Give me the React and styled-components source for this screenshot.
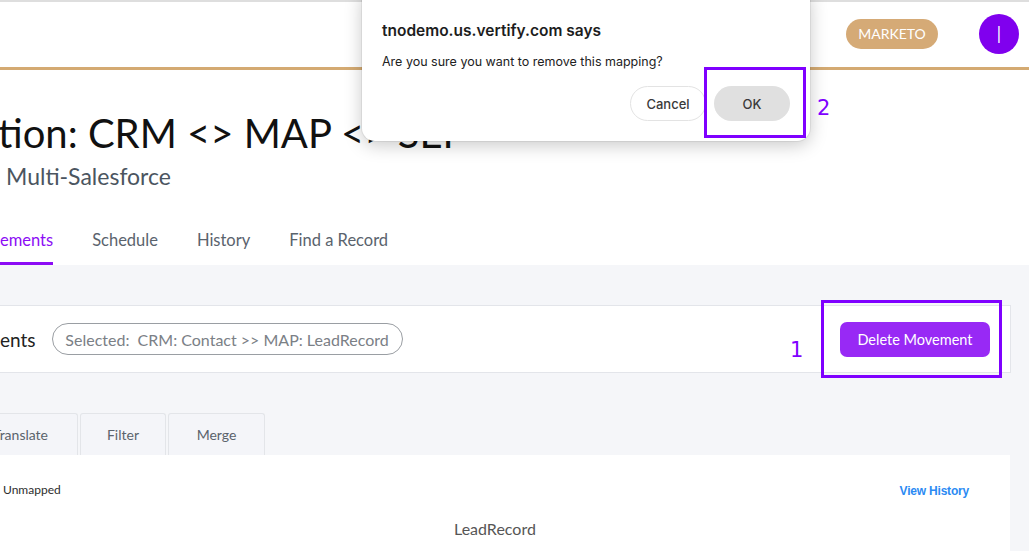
import React from "react"
import styled, { createGlobalStyle } from "styled-components"

const GlobalStyle = createGlobalStyle`
  html, body {
    margin: 0;
    padding: 0;
    background: #ffffff;
    overflow: hidden;
  }
  body {
    font-family: "Lato", "Noto Sans", sans-serif;
  }
`

const Page = styled.div`
  position: relative;
  width: 1029px;
  height: 551px;
  overflow: hidden;
  background: #ffffff;
`

const TopBar = styled.header`
  border-top: 2px solid #dedede;
  border-bottom: 3px solid #d4aa72;
  box-shadow: 0 3px 6px rgba(0, 0, 0, 0.08);
  display: flex;
  align-items: center;
  justify-content: flex-end;
  gap: 41px;
  padding-right: 10px;
  box-sizing: border-box;
  height: 70px;
`

const SourcePill = styled.span`
  background: #d5aa76;
  color: #fff;
  font-size: 14px;
  height: 30px;
  width: 92px;
  border-radius: 15px;
  display: flex;
  align-items: center;
  justify-content: center;
  margin-top: -2px;
`

const Avatar = styled.span`
  width: 40px;
  height: 40px;
  border-radius: 50%;
  background: #8000ee;
  color: #fff;
  font-size: 24px;
  font-weight: 300;
  display: flex;
  align-items: center;
  justify-content: center;
  margin-top: -2px;
`

const Heading = styled.div`
  padding-top: 37px;
  background: #fff;
`

const Title = styled.h1`
  margin: 0 0 0 -2px;
  font-size: 40px;
  font-weight: 400;
  color: #111;
  line-height: 52px;
  white-space: nowrap;
`

const Subtitle = styled.div`
  margin: 2px 0 0 6px;
  font-size: 23px;
  color: #4b5560;
  line-height: 30px;
`

const Tabs = styled.nav`
  display: flex;
  gap: 39px;
  margin-top: 36px;
  height: 38px;
`

const Tab = styled.span`
  font-size: 16.5px;
  color: ${p => (p.$active ? "#8c0cf5" : "#5a636d")};
  border-bottom: ${p => (p.$active ? "3px solid #8c0cf5" : "3px solid transparent")};
  line-height: 22px;
  padding-top: 2px;
  box-sizing: border-box;
  height: 38px;
`

const Body = styled.main`
  background: #f5f6f9;
  padding-top: 40px;
  height: 300px;
`

const SelectionBar = styled.section`
  background: #fff;
  border-top: 1px solid #e3e5ea;
  border-bottom: 1px solid #e3e5ea;
  border-right: 1px solid #e3e5ea;
  width: 1010px;
  height: 66px;
  display: flex;
  align-items: center;
`

const BarLabel = styled.span`
  font-size: 19px;
  color: #222;
  margin-right: 16px;
`

const SelectedPill = styled.span`
  border: 1px solid #9a9ea3;
  border-radius: 17px;
  height: 32px;
  width: 351px;
  box-sizing: border-box;
  display: flex;
  align-items: center;
  justify-content: center;
  font-size: 16px;
  color: #7b8086;
  white-space: pre;
`

const DeleteButton = styled.button`
  margin-left: auto;
  margin-right: 20px;
  width: 150px;
  height: 35px;
  border: none;
  border-radius: 7px;
  background: #9829f5;
  color: #fff;
  font-family: "Lato", sans-serif;
  font-size: 14.5px;
`

const SubTabs = styled.div`
  display: flex;
  gap: 2px;
  margin-top: 40px;
  margin-left: -20px;
`

const SubTab = styled.span`
  height: 42px;
  width: ${p => p.$w}px;
  box-sizing: border-box;
  border: 1px solid #e3e5e9;
  border-bottom: none;
  border-radius: 3px 3px 0 0;
  background: #f4f5f9;
  display: flex;
  align-items: center;
  justify-content: ${p => (p.$end ? "flex-end" : "center")};
  padding-right: ${p => (p.$end ? "29px" : "0")};
  font-size: 14px;
  color: #5b636c;
`

const MapPanel = styled.section`
  background: #fff;
  width: 1010px;
  height: 100px;
  display: grid;
  grid-template-columns: 1fr auto;
  grid-template-rows: 35px 40px;
  padding-top: 17px;
  box-sizing: border-box;
`

const Unmapped = styled.span`
  font-size: 12px;
  color: #2d2d2d;
  padding-left: 3px;
  line-height: 36px;
`

const HistoryLink = styled.a`
  font-family: "Liberation Sans", Arial, sans-serif;
  font-weight: 700;
  font-size: 12px;
  color: #2b8af3;
  margin-right: 41px;
  line-height: 38px;
  letter-spacing: -0.2px;
`

const ObjectName = styled.span`
  grid-column: 1 / span 2;
  font-size: 16px;
  color: #565656;
  padding-left: 454px;
  line-height: 44px;
`

const Dialog = styled.div`
  position: absolute;
  left: 362px;
  top: -12px;
  width: 448px;
  height: 153px;
  background: #fff;
  border-radius: 13px;
  box-shadow: 0 4px 18px rgba(0, 0, 0, 0.22), 0 0 0 1px rgba(0, 0, 0, 0.06);
  box-sizing: border-box;
  padding: 33px 20px 0 20px;
  font-family: "Inter", "Liberation Sans", sans-serif;
`

const DialogTitle = styled.div`
  font-size: 15.5px;
  font-weight: 600;
  color: #1d1d1d;
  line-height: 20px;
`

const DialogText = styled.div`
  margin-top: 12px;
  font-size: 12.5px;
  color: #222;
  line-height: 18px;
`

const DialogActions = styled.div`
  display: flex;
  justify-content: flex-end;
  gap: 8px;
  margin-top: 15px;
`

const DialogButton = styled.button`
  width: 76px;
  height: 35px;
  border-radius: 18px;
  font-family: "Inter", "Liberation Sans", sans-serif;
  font-size: 13px;
  font-weight: 500;
  color: #3a3a3a;
  border: ${p => (p.$primary ? "none" : "1px solid #e3e3e3")};
  background: ${p => (p.$primary ? "#e0e0e0" : "#fff")};
`

const Marker = styled.div`
  position: absolute;
  left: ${p => p.$x}px;
  top: ${p => p.$y}px;
  width: ${p => p.$w}px;
  height: ${p => p.$h}px;
  border: 3px solid #7f00ff;
  box-sizing: border-box;
`

const StepNumber = styled.span`
  position: absolute;
  left: ${p => p.$x}px;
  top: ${p => p.$y}px;
  font-family: "DejaVu Sans", sans-serif;
  font-size: 21px;
  color: #7f00ff;
  line-height: 24px;
`

export default function App() {
  return (
    <Page>
      <GlobalStyle />
      <TopBar>
        <SourcePill>MARKETO</SourcePill>
        <Avatar>I</Avatar>
      </TopBar>

      <Heading>
        <Title>tion: CRM &lt;&gt; MAP &lt;&gt; SEI</Title>
        <Subtitle>Multi-Salesforce</Subtitle>
        <Tabs>
          <Tab $active>ements</Tab>
          <Tab>Schedule</Tab>
          <Tab>History</Tab>
          <Tab>Find a Record</Tab>
        </Tabs>
      </Heading>

      <Body>
        <SelectionBar>
          <BarLabel>ents</BarLabel>
          <SelectedPill>Selected:  CRM: Contact &gt;&gt; MAP: LeadRecord</SelectedPill>
          <DeleteButton>Delete Movement</DeleteButton>
        </SelectionBar>

        <SubTabs>
          <SubTab $w={98} $end>Translate</SubTab>
          <SubTab $w={86}>Filter</SubTab>
          <SubTab $w={97}>Merge</SubTab>
        </SubTabs>

        <MapPanel>
          <Unmapped>Unmapped</Unmapped>
          <HistoryLink>View History</HistoryLink>
          <ObjectName>LeadRecord</ObjectName>
        </MapPanel>
      </Body>

      <Dialog>
        <DialogTitle>tnodemo.us.vertify.com says</DialogTitle>
        <DialogText>Are you sure you want to remove this mapping?</DialogText>
        <DialogActions>
          <DialogButton>Cancel</DialogButton>
          <DialogButton $primary>OK</DialogButton>
        </DialogActions>
      </Dialog>

      <Marker $x={704} $y={67} $w={102} $h={71} />
      <StepNumber $x={817} $y={96}>2</StepNumber>
      <Marker $x={821} $y={300} $w={181} $h={78} />
      <StepNumber $x={790} $y={338}>1</StepNumber>
    </Page>
  )
}
